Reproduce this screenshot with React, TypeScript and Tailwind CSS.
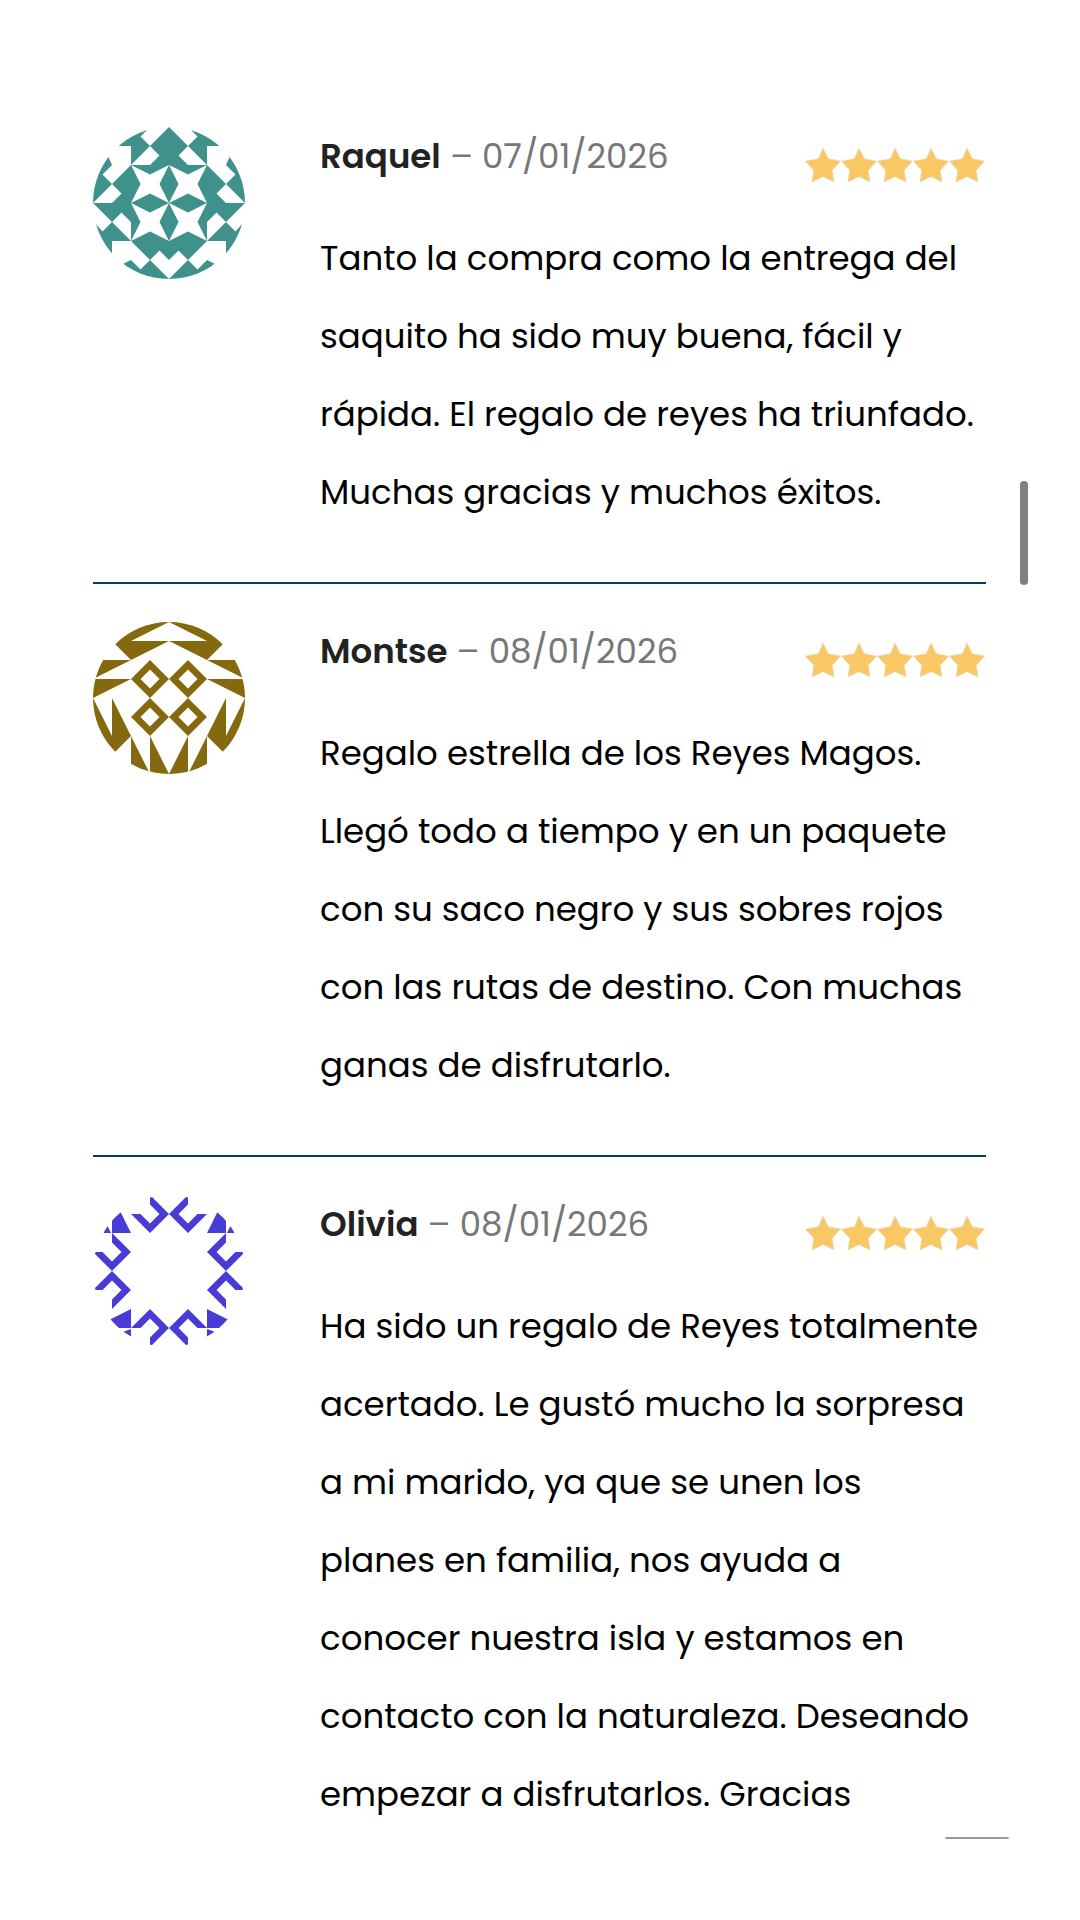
import type { ReactNode } from 'react';

type Review = {
  author: string;
  date: string;
  isoDate: string;
  text: string;
  avatar: ReactNode;
};

// Draws the left half of an avatar and mirrors it on the right
function Mirrored({ id, children }: { id: string; children: ReactNode }) {
  return (
    <>
      <g id={id}>{children}</g>
      <use href={`#${id}`} transform="translate(160 0) scale(-1 1)" />
    </>
  );
}

function TealAvatar() {
  return (
    <g fill="#3f918b">
      <Mirrored id="teal-half">
        <path d="M80 0 60 20 70 30 60 40H80Z" />
        <path d="M40 20H60L40 40Z" />
        <path d="M60 20 50 10 60 0H20V20Z" />
        <path d="M20 60 10 50 20 40 16 31H0V80Z" />
        <path d="M40 40 20 60 30 70 20 80H0L20 100 30 90 40 100Z" />
        <path d="M20 100 10 110 3 102H0V140H20V120H40Z" />
        <path d="M40 120 60 140 70 130 80 140V120Z" />
        <path d="M32 144 40 140 50 150 60 140 80 160H32Z" />
        <path d="M40 40H80V120H40Z" />
        <path fill="#fff" d="M40 40 60 50 80 40 70 60 80 80 60 70 40 80 50 60Z" />
        <path fill="#fff" d="M40 80 60 90 80 80 70 100 80 120 60 110 40 120 50 100Z" />
      </Mirrored>
    </g>
  );
}

function GoldAvatar() {
  return (
    <g fill="#85690f">
      <Mirrored id="gold-half">
        <path d="M20 20 40 40 80 20H40L80 0H20Z" />
        <path d="M40 40H0V60Z" />
        <path d="M0 60H40L0 80Z" />
        <path d="M0 80 20 120V80L40 120 20 140H0Z" />
        <path d="M40 120 60 160H40Z" />
        <path d="M60 120 80 160H60Z" />
        <path fillRule="evenodd" d="M60 40 80 60 60 80 40 60ZM60 50 70 60 60 70 50 60Z" />
        <path fillRule="evenodd" d="M60 80 80 100 60 120 40 100ZM60 90 70 100 60 110 50 100Z" />
      </Mirrored>
    </g>
  );
}

function PurpleAvatar() {
  return (
    <g fill="#483bd6">
      <Mirrored id="purple-half">
        <path d="M80 20 60 40 40 20H50L60 30 70 20 60 10V0Z" />
        <path d="M80 140 60 120 40 140H50L60 130 70 140 60 150V160Z" />
        <path d="M20 40 40 60 20 80 0 60H10L20 70 30 60 20 50Z" />
        <path d="M20 120 40 100 20 80 0 100H10L20 90 30 100 20 110Z" />
        <path d="M20 40V26L29 18 40 40Z" />
        <path d="M11 40 15 32 19 40Z" />
        <path d="M18 131 40 120V140H27Z" />
        <path d="M40 141V149L32 144Z" />
      </Mirrored>
    </g>
  );
}

const reviews: Review[] = [
  {
    author: 'Raquel',
    date: '07/01/2026',
    isoDate: '2026-01-07',
    text: 'Tanto la compra como la entrega del saquito ha sido muy buena, fácil y rápida. El regalo de reyes ha triunfado. Muchas gracias y muchos éxitos.',
    avatar: <TealAvatar />,
  },
  {
    author: 'Montse',
    date: '08/01/2026',
    isoDate: '2026-01-08',
    text: 'Regalo estrella de los Reyes Magos. Llegó todo a tiempo y en un paquete con su saco negro y sus sobres rojos con las rutas de destino. Con muchas ganas de disfrutarlo.',
    avatar: <GoldAvatar />,
  },
  {
    author: 'Olivia',
    date: '08/01/2026',
    isoDate: '2026-01-08',
    text: 'Ha sido un regalo de Reyes totalmente acertado. Le gustó mucho la sorpresa a mi marido, ya que se unen los planes en familia, nos ayuda a conocer nuestra isla y estamos en contacto con la naturaleza. Deseando empezar a disfrutarlos. Gracias',
    avatar: <PurpleAvatar />,
  },
];

function Stars() {
  return (
    <div className="flex pr-px pb-0.5" role="img" aria-label="5 de 5">
      {[1, 2, 3, 4, 5].map((n) => (
        <svg key={n} viewBox="0 0 108 108" className="size-9">
          <path
            d="M54 3 70 35 107 42 82 70 87 105 54 89 21 105 26 70 1 42 40 35Z"
            fill="#f9c864"
            stroke="#e9dcbf"
            strokeWidth="2"
          />
        </svg>
      ))}
    </div>
  );
}

function ReviewItem({ review }: { review: Review }) {
  return (
    <li className="flex border-b-2 border-[#04405c] pt-[38px] pb-[51px] first:pt-0 last:border-b-0 last:pb-0">
      <svg viewBox="0 0 160 160" className="size-[152px] shrink-0 rounded-full">
        {review.avatar}
      </svg>
      <div className="ml-[75px] min-w-0 flex-1">
        <div className="flex items-end justify-between">
          <p className="text-[34px] leading-[58px] text-[#777]">
            <strong className="font-semibold text-[#222]">{review.author}</strong> –{' '}
            <time dateTime={review.isoDate}>{review.date}</time>
          </p>
          <Stars />
        </div>
        <p className="mt-[34px] pr-1 text-[34px] leading-[78px] text-black">{review.text}</p>
      </div>
    </li>
  );
}

export default function App() {
  return (
    <main className="relative min-h-screen bg-white pt-[127px] pr-[94px] pb-[80px] pl-[93px] font-[Poppins,Inter,sans-serif]">
      <ol>
        {reviews.map((review) => (
          <ReviewItem key={review.author} review={review} />
        ))}
      </ol>

      {/* scroll thumb */}
      <div className="absolute top-[481px] right-[52px] h-[104px] w-2 rounded-full bg-[#80807d]" />
      {/* top edge of the floating button */}
      <div className="fixed right-[71px] bottom-[81px] h-0.5 w-16 rounded-t-full bg-[#999]" />
    </main>
  );
}
